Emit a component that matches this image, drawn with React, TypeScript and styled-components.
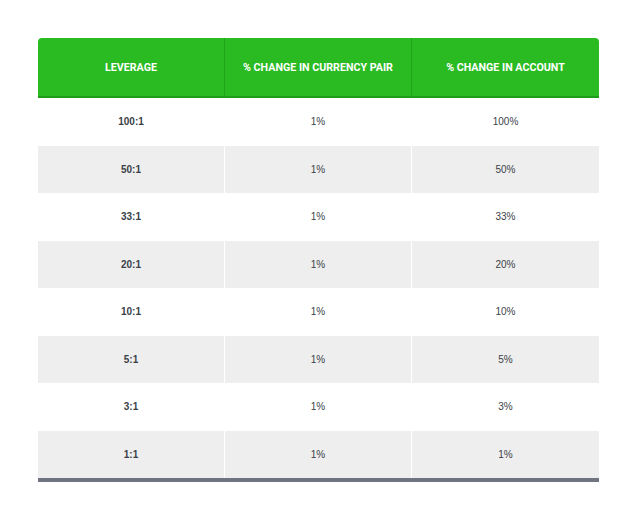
import styled, { createGlobalStyle } from 'styled-components'

type RowType = {
  leverage: string
  pair: string
  account: string
}

const rows: RowType[] = [
  { leverage: '100:1', pair: '1%', account: '100%' },
  { leverage: '50:1', pair: '1%', account: '50%' },
  { leverage: '33:1', pair: '1%', account: '33%' },
  { leverage: '20:1', pair: '1%', account: '20%' },
  { leverage: '10:1', pair: '1%', account: '10%' },
  { leverage: '5:1', pair: '1%', account: '5%' },
  { leverage: '3:1', pair: '1%', account: '3%' },
  { leverage: '1:1', pair: '1%', account: '1%' }
]

const GlobalStyle = createGlobalStyle`
  html, body {
    margin: 0;
    padding: 0;
    background: #fff;
  }
  body {
    font-family: "Liberation Sans", Arial, sans-serif;
  }
`

const App = () => {
  return (
    <>
      <GlobalStyle />
      <StyledPage>
        <StyledTable>
          <colgroup>
            <col style={{ width: '186px' }} />
            <col style={{ width: '187px' }} />
            <col />
          </colgroup>
          <thead>
            <tr>
              <StyledHead>Leverage</StyledHead>
              <StyledHead>% Change in Currency Pair</StyledHead>
              <StyledHead>% Change in Account</StyledHead>
            </tr>
          </thead>
          <tbody>
            {rows.map((row, i) => (
              <StyledRow key={row.leverage} $striped={i % 2 === 1}>
                <StyledCell $bold>{row.leverage}</StyledCell>
                <StyledCell>{row.pair}</StyledCell>
                <StyledCell>{row.account}</StyledCell>
              </StyledRow>
            ))}
          </tbody>
        </StyledTable>
      </StyledPage>
    </>
  )
}

export default App

const StyledPage = styled.div`
  padding: 38px 0 0 38px;
`

const StyledTable = styled.table`
  width: 561px;
  border-collapse: separate;
  border-spacing: 0;
  table-layout: fixed;
  border-bottom: 4px solid #6f7480;
  font-family: "Liberation Sans", Arial, sans-serif;
`

const StyledHead = styled.th`
  height: 58px;
  padding: 0;
  background: #2aba22;
  border-bottom: 2px solid #1f9c19;
  color: #fff;
  font-family: Roboto, "Liberation Sans", sans-serif;
  font-size: 10.7px;
  font-weight: 700;
  text-transform: uppercase;
  text-align: center;
  vertical-align: middle;

  &:not(:first-child) {
    border-left: 1px solid #22a31b;
  }
  &:first-child {
    border-top-left-radius: 4px;
  }
  &:last-child {
    border-top-right-radius: 4px;
  }
`

const StyledRow = styled.tr<{ $striped: boolean }>`
  height: 47.5px;
  background: ${({ $striped }) => ($striped ? '#eeeeee' : '#fff')};
`

const StyledCell = styled.td<{ $bold?: boolean }>`
  padding: 0;
  text-align: center;
  vertical-align: middle;
  font-size: 10px;
  color: #3b3f47;
  font-weight: ${({ $bold }) => ($bold ? 700 : 400)};

  &:not(:first-child) {
    border-left: 1px solid #fff;
  }
`
